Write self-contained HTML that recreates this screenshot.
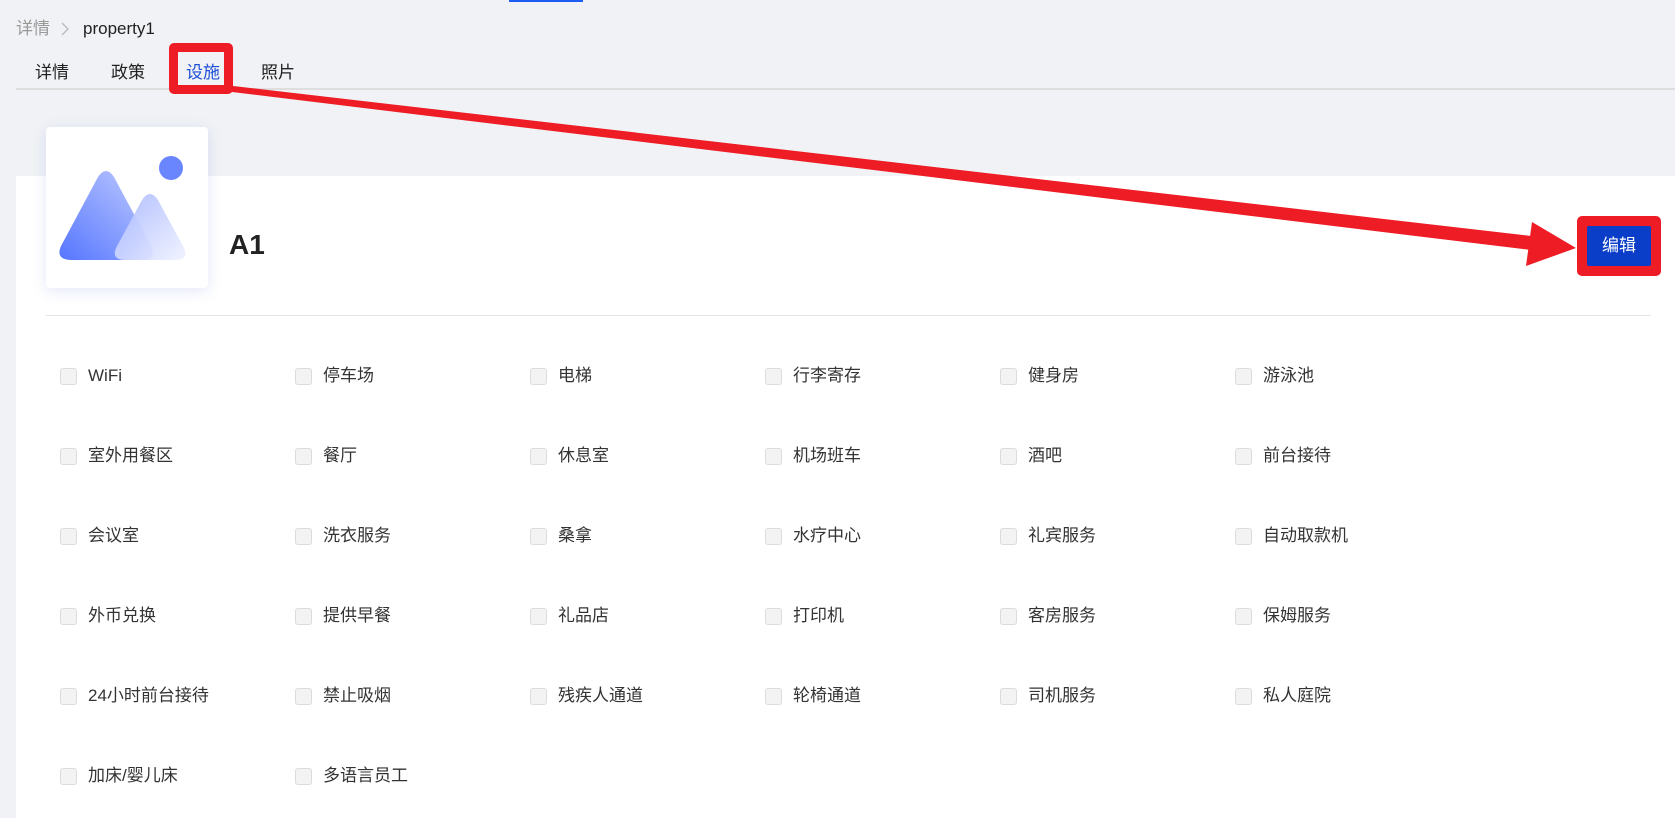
<!DOCTYPE html>
<html><head><meta charset="utf-8"><style>
*{margin:0;padding:0;box-sizing:border-box}
body{width:1675px;height:818px;overflow:hidden;background:#f0f2f5;font-family:"Liberation Sans","Noto Sans CJK SC",sans-serif;color:#333;position:relative}
.a{position:absolute;white-space:nowrap}
.panel{position:absolute;left:16px;top:176px;right:0;bottom:0;background:#fff}
.cb{position:absolute;width:17px;height:17px;border:1px solid #dcdcdc;background:#f3f3f3;border-radius:3px}
.lb{position:absolute;font-size:17px;line-height:20px;color:#333;white-space:nowrap}
.bc{font-size:17px;line-height:22px;top:18px}
</style></head><body>
<div class="a" style="left:509px;top:0;width:74px;height:2px;background:#1d5cf5"></div>
<div class="a bc" style="left:16px;color:#999;font-family:'Noto Sans CJK SC',sans-serif;top:16px">详情</div>
<svg class="a" style="left:60px;top:22px" width="10" height="14"><path d="M2 1 L8 7 L2 13" fill="none" stroke="#bbb" stroke-width="1.4"/></svg>
<div class="a bc" style="left:83px;color:#222">property1</div>
<div class="a" style="left:35px;top:58px;font-size:17px;color:#222">详情</div>
<div class="a" style="left:111px;top:58px;font-size:17px;color:#222">政策</div>
<div class="a" style="left:186px;top:58px;font-size:17px;color:#1f4fd8">设施</div>
<div class="a" style="left:261px;top:58px;font-size:17px;color:#222">照片</div>
<div class="a" style="left:16px;top:88px;right:0;height:2px;background:#dedede"></div>
<div class="panel"></div>
<div class="a" style="left:46px;top:127px;width:162px;height:161px;background:#fff;border-radius:4px;box-shadow:0 3px 14px rgba(100,120,220,0.18)">
<svg width="162" height="161" viewBox="0 0 162 161">
<defs>
<linearGradient id="g1" x1="1" y1="0" x2="0" y2="1"><stop offset="0" stop-color="#c2ccff"/><stop offset="1" stop-color="#5576ff"/></linearGradient>
<linearGradient id="g2" x1="0" y1="0" x2="1" y2="1"><stop offset="0" stop-color="#a9b8ff"/><stop offset="1" stop-color="#f0f2ff"/></linearGradient>
</defs>
<circle cx="125" cy="41" r="12" fill="#6a86ff"/>
<path d="M15 119 L52 50 Q60 38 68 50 L105 119 Q111 133 96 133 L26 133 Q9 133 15 119Z" fill="url(#g1)"/>
<path d="M70 121 L96 73 Q104 61 112 73 L138 121 Q143 133 130 133 L80 133 Q65 133 70 121Z" fill="url(#g2)" opacity="0.93"/>
</svg></div>
<div class="a" style="left:229px;top:229px;font-size:28px;font-weight:bold;color:#222">A1</div>
<div class="a" style="left:46px;top:315px;width:1605px;height:1px;background:#e5e5e5"></div>
<div class="a" style="left:1577px;top:216px;width:84px;height:60px;background:#ee1c25;border-radius:5px"></div>
<div class="a" style="left:1587px;top:226px;width:64px;height:40px;background:#0a3ec8;border-radius:2px;color:#fff;font-size:17px;text-align:center;line-height:40px">编辑</div>
<div class="a" style="left:169px;top:43px;width:64px;height:51px;border:9px solid #ee1c25;border-radius:5px"></div>
<svg class="a" style="left:0;top:0" width="1675" height="818"><polygon points="233,86 1540,237 1539,251 232,92" fill="#ee1c25"/><polygon points="1532,222 1576,248 1526,266" fill="#ee1c25"/></svg>
<div id="grid"></div>
<script>
var L=[["WiFi","停车场","电梯","行李寄存","健身房","游泳池"],["室外用餐区","餐厅","休息室","机场班车","酒吧","前台接待"],["会议室","洗衣服务","桑拿","水疗中心","礼宾服务","自动取款机"],["外币兑换","提供早餐","礼品店","打印机","客房服务","保姆服务"],["24小时前台接待","禁止吸烟","残疾人通道","轮椅通道","司机服务","私人庭院"],["加床/婴儿床","多语言员工"]];
var h="";L.forEach(function(r,i){r.forEach(function(t,j){var x=60+j*235,y=376+i*80;h+='<div class="cb" style="left:'+x+'px;top:'+(y-8)+'px"></div><div class="lb" style="left:'+(x+28)+'px;top:'+(y-10)+'px">'+t+'</div>';});});
document.getElementById("grid").innerHTML=h;
</script>
</body></html>
